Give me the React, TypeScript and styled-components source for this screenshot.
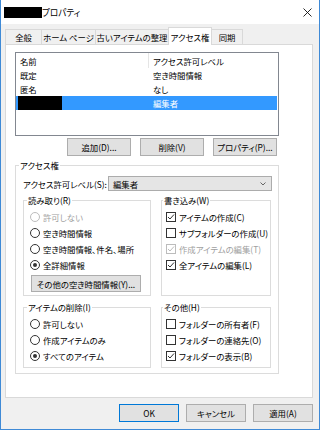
import styled, { createGlobalStyle, css } from 'styled-components';

const GlobalStyle = createGlobalStyle`
  * { box-sizing: border-box; }
  html, body { margin: 0; padding: 0; background: #ffffff; }
  body {
    font-family: 'Noto Sans CJK JP', 'Noto Sans', sans-serif;
    font-size: 8.4px;
    font-feature-settings: 'palt' 1;
    color: #000000;
  }
`;

const Window = styled.div`
  width: 320px;
  height: 430px;
  display: flex;
  flex-direction: column;
  border: 1px solid #3f8ad6;
  border-top: none;
  background: #f0f0f0;
`;

const TitleBar = styled.div`
  flex: 0 0 24px;
  background: #ffffff;
  display: flex;
  align-items: center;
  padding: 0 7px 0 3px;
`;

const TitleText = styled.span`
  font-size: 8.6px;
  line-height: 11px;
`;

const Redacted = styled.span<{ $w: number; $h: number }>`
  display: block;
  flex: 0 0 auto;
  width: ${(p) => p.$w}px;
  height: ${(p) => p.$h}px;
  background: #000000;
`;

const CloseIcon = styled.svg`
  margin-left: auto;
  width: 9px;
  height: 9px;
`;

const Body = styled.div`
  flex: 1;
  display: flex;
  flex-direction: column;
  padding: 3px 6px 0 4px;
`;

const Tabs = styled.div`
  display: flex;
  align-items: flex-end;
  height: 17px;
`;

const Tab = styled.div<{ $w: number; $active?: boolean }>`
  width: ${(p) => p.$w}px;
  height: 15px;
  border: 1px solid #d9d9d9;
  border-bottom: none;
  background: #f0f0f0;
  display: flex;
  align-items: center;
  justify-content: center;
  white-space: nowrap;

  & + & {
    margin-left: -1px;
  }

  ${(p) =>
    p.$active &&
    css`
      height: 18px;
      margin-bottom: -1px;
      background: #ffffff;
      position: relative;
      z-index: 1;
    `}
`;

const Panel = styled.div`
  height: 354px;
  background: #ffffff;
  border: 1px solid #d9d9d9;
  padding: 7px 33px 0 9px;
  display: flex;
  flex-direction: column;
`;

const ListView = styled.div`
  height: 84px;
  border: 1px solid #828790;
  background: #ffffff;
`;

const ListHeader = styled.div`
  display: grid;
  grid-template-columns: 133px 1fr;
  height: 15px;
`;

const HeaderCell = styled.div`
  display: flex;
  align-items: center;
  padding-left: 4px;

  &:first-child {
    border-right: 1px solid #e5e5e5;
  }
`;

const ListRow = styled.div<{ $selected?: boolean }>`
  display: grid;
  grid-template-columns: 133px 1fr;
  height: 14px;
  background: ${(p) => (p.$selected ? '#3399ff' : 'transparent')};
  color: ${(p) => (p.$selected ? '#ffffff' : '#000000')};
  margin-right: 1px;
`;

const Cell = styled.div<{ $pad?: number }>`
  display: flex;
  align-items: center;
  padding-left: ${(p) => p.$pad ?? 4}px;
`;

const ButtonRow = styled.div`
  display: flex;
  justify-content: flex-end;
  gap: 9px;
  margin-top: 2px;
  padding-right: 2px;
`;

const Button = styled.button<{ $w: number; $h?: number; $default?: boolean }>`
  width: ${(p) => p.$w}px;
  height: ${(p) => p.$h ?? 18}px;
  padding: 0;
  background: #e1e1e1;
  border: 1px solid ${(p) => (p.$default ? '#0078d7' : '#adadad')};
  font: inherit;
  color: #000000;
  display: flex;
  align-items: center;
  justify-content: center;
  white-space: nowrap;
`;

const Group = styled.fieldset<{ $inset?: number }>`
  margin: 0;
  min-width: 0;
  border: 1px solid #dcdcdc;
  padding: 3px 4px 3px ${(p) => p.$inset ?? 6}px;
`;

const AccessGroup = styled(Group)`
  margin-top: 3px;
  padding: 0 7px 5px 7px;
`;

const Legend = styled.legend<{ $shift?: number }>`
  margin-left: ${(p) => p.$shift ?? -3}px;
  padding: 0 1px;
  line-height: 12px;
`;

const LevelRow = styled.div`
  display: flex;
  align-items: center;
  height: 15px;
  margin-top: 5px;
`;

const LevelLabel = styled.span`
  flex: 0 0 85px;
  white-space: nowrap;
`;

const Select = styled.div`
  flex: 1;
  height: 15px;
  margin-right: -1px;
  background: #e5e5e5;
  border: 1px solid #acacac;
  display: flex;
  align-items: center;
  justify-content: space-between;
  padding: 0 5px 0 4px;
`;

const SubGrid = styled.div`
  display: grid;
  grid-template-columns: 128px 1fr;
  column-gap: 10px;
  row-gap: 5px;
  margin-top: 3px;
`;

const Option = styled.div<{ $disabled?: boolean }>`
  display: flex;
  align-items: center;
  gap: 3px;
  height: 16px;
  white-space: nowrap;
  color: ${(p) => (p.$disabled ? '#a0a0a0' : '#000000')};
`;

const RadioMark = styled.span<{ $checked?: boolean; $disabled?: boolean }>`
  width: 10px;
  height: 10px;
  flex: 0 0 10px;
  border-radius: 50%;
  border: 1px solid ${(p) => (p.$disabled ? '#bcbcbc' : '#333333')};
  background: #ffffff;
  display: flex;
  align-items: center;
  justify-content: center;

  ${(p) =>
    p.$checked &&
    css`
      &::after {
        content: '';
        width: 4px;
        height: 4px;
        border-radius: 50%;
        background: #333333;
      }
    `}
`;

const CheckMark = styled.span<{ $disabled?: boolean }>`
  width: 10px;
  height: 10px;
  flex: 0 0 10px;
  border: 1px solid ${(p) => (p.$disabled ? '#bcbcbc' : '#333333')};
  background: #ffffff;
  display: flex;
  align-items: center;
  justify-content: center;
`;

const MoreButton = styled(Button)`
  margin: 2px 0 0 1px;
`;

const Footer = styled.div`
  display: flex;
  justify-content: flex-end;
  gap: 7px;
  padding-top: 6px;
`;

type Choice = { label: string; checked?: boolean; disabled?: boolean };

const Radio = ({ label, checked, disabled }: Choice) => (
  <Option $disabled={disabled}>
    <RadioMark $checked={checked} $disabled={disabled} />
    {label}
  </Option>
);

const Check = ({ label, checked, disabled }: Choice) => (
  <Option $disabled={disabled}>
    <CheckMark $disabled={disabled}>
      {checked && (
        <svg width='8' height='8' viewBox='0 0 8 8'>
          <polyline
            points='1,4 3,6 7,1.5'
            fill='none'
            stroke={disabled ? '#bcbcbc' : '#333333'}
            strokeWidth='1'
          />
        </svg>
      )}
    </CheckMark>
    {label}
  </Option>
);

const tabs = [
  { label: '全般', w: 37 },
  { label: 'ホーム ページ', w: 55 },
  { label: '古いアイテムの整理', w: 74 },
  { label: 'アクセス権', w: 44, active: true },
  { label: '同期', w: 32 },
];

const readChoices: Choice[] = [
  { label: '許可しない', disabled: true },
  { label: '空き時間情報' },
  { label: '空き時間情報、件名、場所' },
  { label: '全詳細情報', checked: true },
];

const writeChoices: Choice[] = [
  { label: 'アイテムの作成(C)', checked: true },
  { label: 'サブフォルダーの作成(U)' },
  { label: '作成アイテムの編集(T)', checked: true, disabled: true },
  { label: '全アイテムの編集(L)', checked: true },
];

const deleteChoices: Choice[] = [
  { label: '許可しない' },
  { label: '作成アイテムのみ' },
  { label: 'すべてのアイテム', checked: true },
];

const otherChoices: Choice[] = [
  { label: 'フォルダーの所有者(F)' },
  { label: 'フォルダーの連絡先(O)' },
  { label: 'フォルダーの表示(B)', checked: true },
];

const App = () => {
  return (
    <>
      <GlobalStyle />
      <Window>
        <TitleBar>
          <Redacted $w={38} $h={11} />
          <TitleText>プロパティ</TitleText>
          <CloseIcon viewBox='0 0 9 9'>
            <path d='M0.5 0.5 L8.5 8.5 M8.5 0.5 L0.5 8.5' stroke='#111111' strokeWidth='0.9' />
          </CloseIcon>
        </TitleBar>
        <Body>
          <Tabs>
            {tabs.map((t) => (
              <Tab key={t.label} $w={t.w} $active={t.active}>
                {t.label}
              </Tab>
            ))}
          </Tabs>
          <Panel>
            <ListView>
              <ListHeader>
                <HeaderCell>名前</HeaderCell>
                <HeaderCell>アクセス許可レベル</HeaderCell>
              </ListHeader>
              <ListRow>
                <Cell>既定</Cell>
                <Cell>空き時間情報</Cell>
              </ListRow>
              <ListRow>
                <Cell>匿名</Cell>
                <Cell>なし</Cell>
              </ListRow>
              <ListRow $selected>
                <Cell $pad={2}>
                  <Redacted $w={44} $h={14} />
                </Cell>
                <Cell>編集者</Cell>
              </ListRow>
            </ListView>

            <ButtonRow>
              <Button $w={64}>追加(D)...</Button>
              <Button $w={64}>削除(V)</Button>
              <Button $w={64}>プロパティ(P)...</Button>
            </ButtonRow>

            <AccessGroup>
              <Legend $shift={-4}>アクセス権</Legend>
              <LevelRow>
                <LevelLabel>アクセス許可レベル(S):</LevelLabel>
                <Select>
                  編集者
                  <svg width='6' height='4' viewBox='0 0 6 4'>
                    <polyline points='0.5,0.5 3,3 5.5,0.5' fill='none' stroke='#555555' strokeWidth='0.9' />
                  </svg>
                </Select>
              </LevelRow>

              <SubGrid>
                <Group $inset={6}>
                  <Legend>読み取り(R)</Legend>
                  {readChoices.map((c) => (
                    <Radio key={c.label} {...c} />
                  ))}
                  <MoreButton $w={110} $h={17}>
                    その他の空き時間情報(Y)...
                  </MoreButton>
                </Group>
                <Group $inset={4}>
                  <Legend>書き込み(W)</Legend>
                  {writeChoices.map((c) => (
                    <Check key={c.label} {...c} />
                  ))}
                </Group>
                <Group $inset={6}>
                  <Legend>アイテムの削除(I)</Legend>
                  {deleteChoices.map((c) => (
                    <Radio key={c.label} {...c} />
                  ))}
                </Group>
                <Group $inset={4}>
                  <Legend>その他(H)</Legend>
                  {otherChoices.map((c) => (
                    <Check key={c.label} {...c} />
                  ))}
                </Group>
              </SubGrid>
            </AccessGroup>
          </Panel>

          <Footer>
            <Button $w={60} $default>
              OK
            </Button>
            <Button $w={60}>キャンセル</Button>
            <Button $w={60}>適用(A)</Button>
          </Footer>
        </Body>
      </Window>
    </>
  );
};

export default App;
